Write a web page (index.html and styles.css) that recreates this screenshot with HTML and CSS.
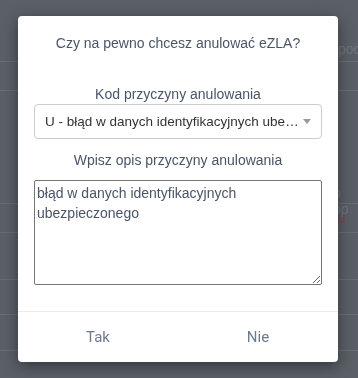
FILE: index.html
```html
<!DOCTYPE html>
<html lang="pl">
<head>
    <meta charset="UTF-8">
    <meta name="viewport" content="width=device-width, initial-scale=1.0">
    <title>Anuluj eZLA</title>
    <link rel="stylesheet" href="styles.css">
</head>
<body>
    <div class="page">
        <div class="row row-first"><span class="row-text">poc</span></div>
        <div class="row row-short"></div>
        <div class="row row-tall"><span class="row-text row-text-low">o op</span></div>
        <div class="row row-mid"><span class="row-error">u</span></div>
        <div class="row row-mid2"></div>
        <div class="row row-mid3"></div>
        <div class="row row-last"></div>
    </div>

    <div class="dialog">
        <div class="dialog-body">
            <div class="dialog-title">Czy na pewno chcesz anulować eZLA?</div>

            <label class="field-label">Kod przyczyny anulowania</label>
            <div class="select-box">
                <span class="select-value">U - błąd w danych identyfikacyjnych ubezpieczonego</span>
                <span class="select-arrow"></span>
            </div>

            <label class="field-label field-label-second">Wpisz opis przyczyny anulowania</label>
            <textarea class="reason-text">błąd w danych identyfikacyjnych ubezpieczonego</textarea>
        </div>
        <div class="dialog-footer">
            <button class="dialog-button">Tak</button>
            <button class="dialog-button">Nie</button>
        </div>
    </div>
</body>
</html>
```

FILE: styles.css
```css
/* Page behind the modal */
body {
    margin: 0;
    height: 378px;
    overflow: hidden;
    background-color: #5b6068;
    font-family: "Liberation Sans", Arial, sans-serif;
}

.page {
    display: flex;
    flex-direction: column;
}

.row {
    border-bottom: 1px solid #696e76;
    position: relative;
}

.row-first { height: 61px; }
.row-short { height: 28px; }
.row-tall { height: 112px; }
.row-mid { height: 28px; }
.row-mid2 { height: 46px; }
.row-mid3 { height: 34px; }
.row-last { height: 35px; }

.row-text {
    position: absolute;
    left: 338px;
    top: 41px;
    font-size: 14px;
    color: #6e7580;
}

.row-text-low {
    top: 94px;
    left: 333px;
}

.row-error {
    position: absolute;
    left: 338px;
    top: 6px;
    font-size: 14px;
    line-height: 16px;
    color: #7a4a52;
}

/* Modal */
.dialog {
    position: fixed;
    left: 18px;
    top: 16px;
    width: 320px;
    height: 346px;
    background-color: #fff;
    border-radius: 4px;
    box-shadow: 0 4px 16px rgba(0, 0, 0, 0.45);
    display: flex;
    flex-direction: column;
}

.dialog-body {
    padding: 17px 16px 0;
    display: flex;
    flex-direction: column;
    height: 296px;
    box-sizing: border-box;
    border-bottom: 1px solid #e9ecef;
}

.dialog-title {
    font-size: 14px;
    line-height: 20px;
    text-align: center;
    color: #4a5568;
    margin-bottom: 31px;
}

.field-label {
    font-size: 14px;
    line-height: 20px;
    text-align: center;
    color: #4a5568;
}

.field-label-second {
    margin-top: 11px;
    margin-bottom: 10px;
}

.select-box {
    display: flex;
    align-items: center;
    height: 35px;
    box-sizing: border-box;
    border: 1px solid #ccc;
    border-radius: 4px;
    padding: 0 10px 0 10px;
    gap: 3px;
}

.select-value {
    flex: 1;
    font-size: 13.5px;
    color: #333;
    white-space: nowrap;
    overflow: hidden;
    text-overflow: ellipsis;
}

.select-arrow {
    width: 0;
    height: 0;
    border-left: 4px solid transparent;
    border-right: 4px solid transparent;
    border-top: 5px solid #999;
}

.reason-text {
    display: block;
    width: 100%;
    height: 105px;
    box-sizing: border-box;
    border: 1px solid #767676;
    border-radius: 2px;
    padding: 2px 2px;
    margin: 0;
    font-family: "Liberation Sans", Arial, sans-serif;
    font-size: 14px;
    line-height: 20px;
    color: #4a5568;
    resize: vertical;
    outline: none;
}

.dialog-footer {
    flex: 1;
    display: flex;
}

.dialog-button {
    flex: 1;
    border: none;
    background: none;
    font-family: Roboto, "Liberation Sans", sans-serif;
    font-size: 15px;
    color: #6c7a8f;
    cursor: pointer;
    padding: 0;
}
```
